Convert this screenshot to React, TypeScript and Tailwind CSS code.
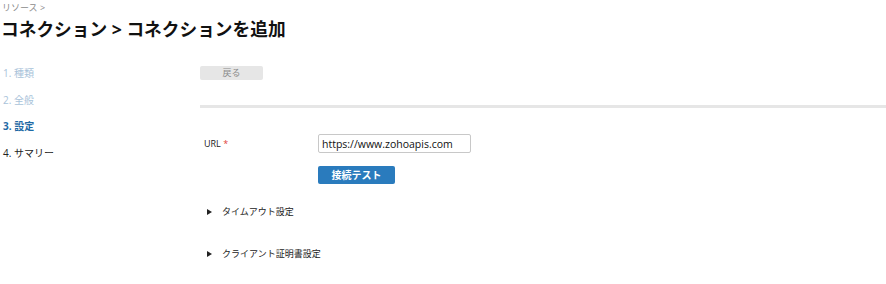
const font = { fontFamily: '"Open Sans", "Noto Sans CJK JP", sans-serif' };

const steps = [
  { label: '1. 種類', cls: 'text-[#a9c3da]' },
  { label: '2. 全般', cls: 'text-[#a9c3da]' },
  { label: '3. 設定', cls: 'text-[#1f6aa5] font-bold' },
  { label: '4. サマリー', cls: 'text-[#222]' },
];

function Section({ title }: { title: string }) {
  return (
    <div className="flex items-center h-[14px] pl-[7px]">
      <span className="w-0 h-0 border-y-[3.5px] border-y-transparent border-l-[5px] border-l-[#222]" />
      <span className="ml-[10px] text-[9px] leading-[14px] text-[#222]">{title}</span>
    </div>
  );
}

export default function App() {
  return (
    <div className="w-[886px] h-[284px] bg-white overflow-hidden" style={font}>
      <div className="pl-[2px] pt-[2px] text-[9px] leading-[12px] text-[#8c8c8c]">リソース &gt;</div>
      <h1 className="pl-[1px] mt-[3px] text-[17.7px] leading-[24px] font-bold text-[#111]">
        コネクション &gt; コネクションを追加
      </h1>

      <div className="flex mt-[19px]">
        <ul className="w-[200px] pl-[3px] pt-[5px] text-[10px]">
          {steps.map((s) => (
            <li key={s.label} className={`h-[26.7px] leading-[16px] ${s.cls}`}>
              {s.label}
            </li>
          ))}
        </ul>

        <div className="flex-1 pt-[6px]">
          <button className="block w-[63px] h-[14px] rounded-[2px] bg-[#e6e6e6] text-[9px] leading-[14px] text-[#8a8a8a]">
            戻る
          </button>
          <div className="mt-[25px] h-[3px] bg-[#e6e6e6]" />

          <div className="flex items-center mt-[26px]">
            <label className="w-[118px] pl-[4px] text-[9px] text-[#222]">
              URL <span className="text-[#e0403a]">*</span>
            </label>
            <input
              readOnly
              value="https://www.zohoapis.com"
              className="block w-[153px] h-[19px] px-[3px] border border-[#c8c8c8] rounded-[2px] text-[10.5px] text-[#111] outline-none"
            />
          </div>
          <div className="flex pl-[118px] mt-[13px]">
            <button className="block w-[77px] h-[18px] rounded-[2px] bg-[#2a7bbd] text-white text-[10px] font-bold">
              接続テスト
            </button>
          </div>

          <div className="mt-[21px]">
            <Section title="タイムアウト設定" />
          </div>
          <div className="mt-[28px]">
            <Section title="クライアント証明書設定" />
          </div>
        </div>
      </div>
    </div>
  );
}
